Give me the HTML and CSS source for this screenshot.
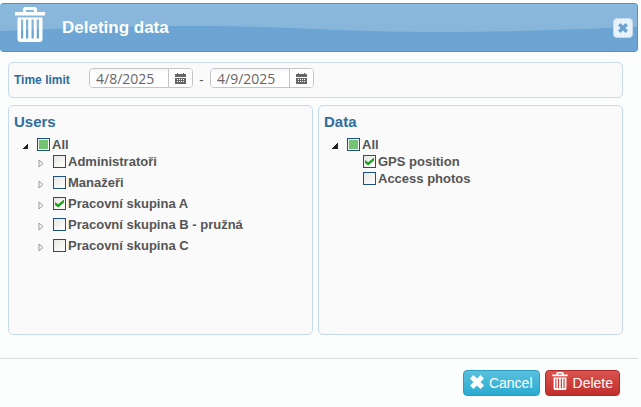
FILE: index.html
```html
<!DOCTYPE html>
<html lang="en">

<head>
    <meta charset="UTF-8" />
    <title>Deleting data</title>
    <link rel="stylesheet" href="styles.css">
</head>

<body>

    <!-- shared icons -->
    <svg class="sprite" aria-hidden="true">
        <symbol id="trash" viewBox="0 0 30 35">
            <path fill="currentColor" fill-rule="evenodd" d="M8 5V2.500Q8 0 10.500 0H19.500Q22 0 22 2.500V5H30V8.500H0V5ZM11 3V5H19V3ZM2.500 10.500H27.500V32Q27.500 35 24.500 35H5.500Q2.500 35 2.500 32ZM6 12.500V31.500H8.200V12.500ZM11 12.500V31.500H13.300V12.500ZM16.500 12.500V31.500H18.800V12.500ZM21.700 12.500V31.500H24V12.500Z" />
        </symbol>
        <symbol id="calendar" viewBox="0 0 11 11">
            <path fill="currentColor" fill-rule="evenodd" d="M0 1H2V0H3V1H8V0H9V1H11V4H0ZM0 5H11V11H0ZM2 6V7H3V6ZM4 6V7H5V6ZM6 6V7H7V6ZM8 6V7H9V6ZM2 8V9H3V8ZM4 8V9H5V8ZM6 8V9H7V8ZM8 8V9H9V8Z" />
        </symbol>
        <symbol id="cross" viewBox="0 0 14 14">
            <path fill="currentColor" d="M3.500 0L7 3.500L10.500 0L14 3.500L10.500 7L14 10.500L10.500 14L7 10.500L3.500 14L0 10.500L3.500 7L0 3.500Z" />
        </symbol>
    </svg>

    <div class="dialog">
        <header class="title-bar">
            <svg class="wave" viewBox="0 0 638 47" preserveAspectRatio="none" aria-hidden="true">
                <path d="M0 27C70 24 130 22 200 22C290 22 340 28 440 28C520 28 580 25 638 23V47H0Z" />
            </svg>
            <svg class="title-icon" aria-hidden="true"><use href="#trash" /></svg>
            <h1>Deleting data</h1>
            <button class="close" type="button" aria-label="Close">
                <svg aria-hidden="true"><use href="#cross" /></svg>
            </button>
        </header>

        <main class="content">
            <div class="panel period">
                <label class="period-label" for="from">Time limit</label>
                <div class="date">
                    <input type="text" id="from" value="4/8/2025">
                    <button type="button" aria-label="Pick start date"><svg aria-hidden="true"><use href="#calendar" /></svg></button>
                </div>
                <span class="dash">-</span>
                <div class="date">
                    <input type="text" id="to" value="4/9/2025" aria-label="Time limit end">
                    <button type="button" aria-label="Pick end date"><svg aria-hidden="true"><use href="#calendar" /></svg></button>
                </div>
            </div>

            <div class="columns">
                <section class="panel">
                    <h2>Users</h2>
                    <div class="row root">
                        <span class="arrow open"></span>
                        <input type="checkbox" class="partial" id="users-all">
                        <label for="users-all">All</label>
                    </div>
                    <ul class="groups">
                        <li class="row">
                            <svg class="arrow" viewBox="0 0 6 9" aria-hidden="true"><path d="M1 1L5 4.500L1 8Z" /></svg>
                            <input type="checkbox" id="u1">
                            <label for="u1">Administratoři</label>
                        </li>
                        <li class="row">
                            <svg class="arrow" viewBox="0 0 6 9" aria-hidden="true"><path d="M1 1L5 4.500L1 8Z" /></svg>
                            <input type="checkbox" id="u2">
                            <label for="u2">Manažeři</label>
                        </li>
                        <li class="row">
                            <svg class="arrow" viewBox="0 0 6 9" aria-hidden="true"><path d="M1 1L5 4.500L1 8Z" /></svg>
                            <input type="checkbox" id="u3" checked>
                            <label for="u3">Pracovní skupina A</label>
                        </li>
                        <li class="row">
                            <svg class="arrow" viewBox="0 0 6 9" aria-hidden="true"><path d="M1 1L5 4.500L1 8Z" /></svg>
                            <input type="checkbox" id="u4">
                            <label for="u4">Pracovní skupina B - pružná</label>
                        </li>
                        <li class="row">
                            <svg class="arrow" viewBox="0 0 6 9" aria-hidden="true"><path d="M1 1L5 4.500L1 8Z" /></svg>
                            <input type="checkbox" id="u5">
                            <label for="u5">Pracovní skupina C</label>
                        </li>
                    </ul>
                </section>

                <section class="panel">
                    <h2>Data</h2>
                    <div class="row root">
                        <span class="arrow open"></span>
                        <input type="checkbox" class="partial" id="data-all">
                        <label for="data-all">All</label>
                    </div>
                    <ul class="items">
                        <li class="row">
                            <input type="checkbox" id="d1" checked>
                            <label for="d1">GPS position</label>
                        </li>
                        <li class="row">
                            <input type="checkbox" id="d2">
                            <label for="d2">Access photos</label>
                        </li>
                    </ul>
                </section>
            </div>
        </main>

        <footer class="actions">
            <button type="button" class="btn cancel">
                <svg aria-hidden="true"><use href="#cross" /></svg>
                Cancel
            </button>
            <button type="button" class="btn delete">
                <svg aria-hidden="true"><use href="#trash" /></svg>
                Delete
            </button>
        </footer>
    </div>

    <script>
        document.querySelectorAll('.partial').forEach(function (box) {
            box.indeterminate = true;
        });
    </script>

</body>

</html>
```
FILE: styles.css
```css
* {
    box-sizing: border-box;
}

body {
    margin: 0;
    background-color: #fcfdfd;
    font-family: "Liberation Sans", Arial, sans-serif;
    font-size: 13px;
    color: #555;
}

button {
    font-family: inherit;
    cursor: pointer;
}

.sprite {
    display: none;
}

.dialog {
    padding-top: 3px;
    margin-right: 3px;
}

/* title bar */
.title-bar {
    position: relative;
    display: flex;
    align-items: center;
    height: 49px;
    padding: 0 4px 0 15px;
    border: 1px solid #4297d7;
    border-left: none;
    border-radius: 4px;
    background: linear-gradient(#8bb9dd, #85b3d8);
    color: #fff;
    overflow: hidden;
}

.wave {
    position: absolute;
    top: 0;
    left: 0;
    width: 100%;
    height: 100%;
}

.wave path {
    fill: #6ca5d3;
}

.title-icon {
    position: relative;
    width: 30px;
    height: 35px;
    margin-bottom: 6px;
}

.title-bar h1 {
    position: relative;
    flex: 1;
    margin: 0 0 0 17px;
    font-size: 17px;
    line-height: 20px;
}

.close {
    position: relative;
    display: flex;
    align-items: center;
    justify-content: center;
    width: 20px;
    height: 20px;
    padding: 0;
    border: 1px solid #c5dbec;
    border-radius: 4px;
    background-color: #e8f2fb;
    color: #6ca5d3;
}

.close svg {
    width: 10px;
    height: 10px;
}

/* panels */
.content {
    padding: 10px 15px 23px 8px;
}

.panel {
    border: 1px solid #c5dbec;
    border-radius: 5px;
    background-color: #fafafa;
    padding: 5px;
}

.period {
    display: flex;
    align-items: flex-start;
    height: 36px;
    margin-bottom: 7px;
}

.period-label {
    width: 75px;
    padding-top: 5px;
    font-size: 12px;
    font-weight: bold;
    line-height: 14px;
    color: #2e6e9e;
}

.date {
    display: flex;
    height: 20px;
    border: 1px solid #c5c5c5;
    border-radius: 4px;
    background-color: #fff;
    overflow: hidden;
}

.date input {
    width: 78px;
    padding: 0 6px;
    border: none;
    background: linear-gradient(#f4f4f4, #fff 4px);
    font-family: "Open Sans", sans-serif;
    font-size: 14px;
    color: #666;
}

.date button {
    display: flex;
    align-items: center;
    justify-content: center;
    width: 24px;
    padding: 0;
    border: none;
    border-left: 1px solid #c5c5c5;
    background-color: #fff;
    color: #666;
}

.date svg {
    width: 11px;
    height: 11px;
}

.dash {
    width: 17px;
    padding-top: 5px;
    line-height: 14px;
    text-align: center;
}

.columns {
    display: grid;
    grid-template-columns: 1fr 1fr;
    gap: 5px;
}

.columns .panel {
    min-height: 230px;
}

h2 {
    margin: 0 0 3px;
    font-size: 15px;
    line-height: 22px;
    color: #2e6e9e;
}

/* trees */
ul {
    list-style: none;
    margin: 0;
    padding: 0;
}

.row {
    display: flex;
    align-items: center;
    height: 17px;
    font-weight: bold;
}

.root {
    padding-left: 8px;
}

.groups {
    padding-left: 24px;
}

.groups .row {
    margin-bottom: 4px;
}

.items {
    padding-left: 39px;
}

.arrow {
    width: 6px;
    height: 9px;
    margin: 3px 9px 0 0;
    fill: none;
    stroke: #999;
}

.arrow.open {
    height: 6px;
    background: linear-gradient(135deg, transparent 50%, #222 50%);
}

.row input {
    appearance: none;
    flex: none;
    display: grid;
    place-items: center;
    width: 13px;
    height: 13px;
    margin: 0 2px 0 0;
    border: 1px solid #1c5180;
    background: linear-gradient(135deg, #e6e6e2, #fff);
}

.row input:checked::before {
    content: "";
    width: 9px;
    height: 8px;
    background-color: #21a121;
    clip-path: polygon(0 30%, 35% 60%, 100% 0, 100% 38%, 35% 100%, 0 68%);
}

.row input:indeterminate::before {
    content: "";
    width: 9px;
    height: 9px;
    background-color: #73c373;
}

/* footer */
.actions {
    display: flex;
    justify-content: flex-end;
    gap: 5px;
    padding: 11px 18px;
    border-top: 1px solid #ddd;
}

.btn {
    display: flex;
    align-items: center;
    gap: 5px;
    height: 26px;
    padding: 0 6px;
    border: 1px solid;
    border-radius: 4px;
    font-size: 14px;
    color: #fff;
}

.cancel {
    border-color: #2b9fc4;
    background: linear-gradient(#5bc0de, #2aabd2);
}

.delete {
    border-color: #b02a27;
    background: linear-gradient(#d9534f, #c12e2a);
}

.cancel svg {
    width: 14px;
    height: 14px;
    margin-bottom: 3px;
}

.delete svg {
    width: 16px;
    height: 18px;
    margin-bottom: 4px;
}
```
